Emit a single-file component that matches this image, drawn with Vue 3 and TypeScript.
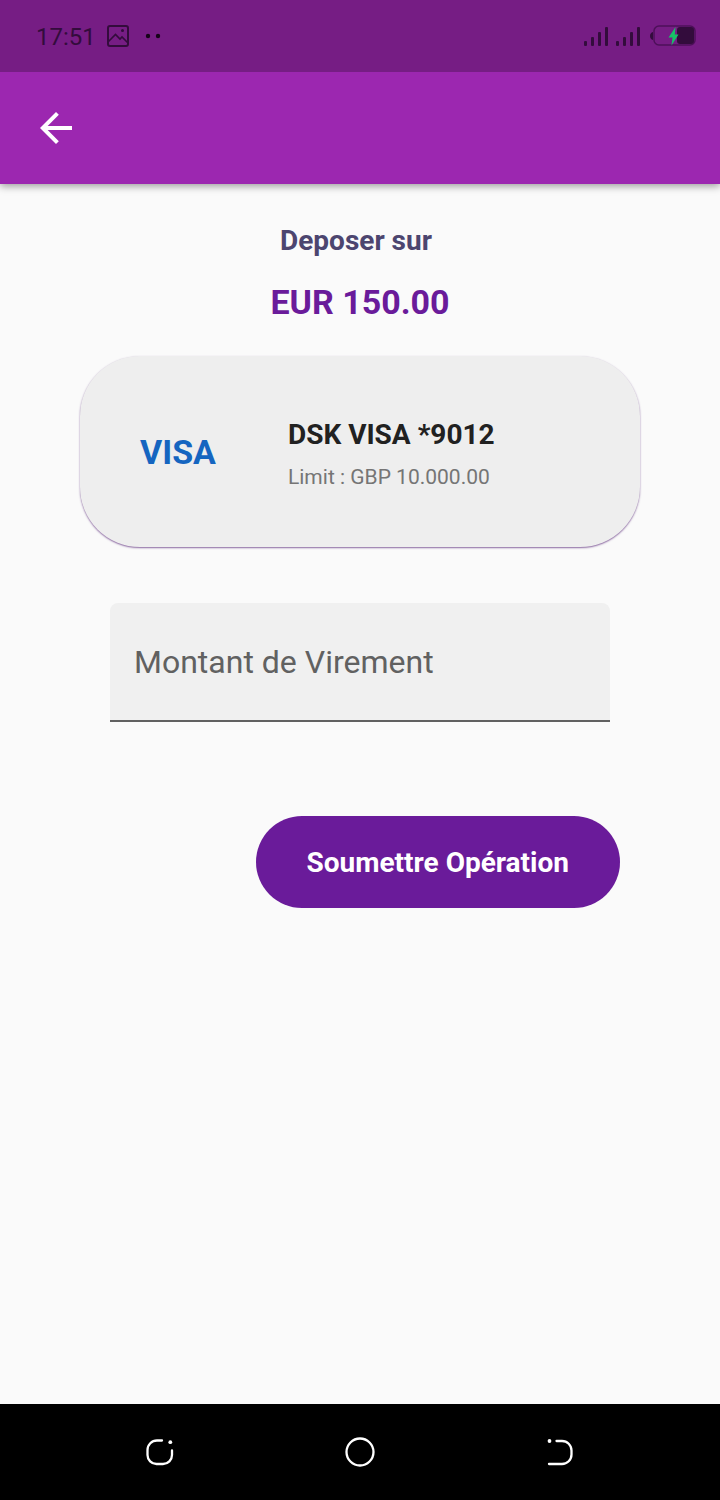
<script setup lang="ts">
import { ref } from 'vue'

interface Card {
  brand: string
  name: string
  limit: string
}

const card: Card = {
  brand: 'VISA',
  name: 'DSK VISA *9012',
  limit: 'Limit : GBP 10.000.00',
}

const amount = ref('')
const signals = [0, 32]
</script>

<template>
  <div class="screen">
    <div class="status-bar">
      <div class="status-group">
        <span class="clock">17:51</span>
        <svg class="picture" width="24" height="24" viewBox="0 0 24 24" fill="none" stroke="currentColor" stroke-width="2" aria-hidden="true">
          <rect x="2" y="2" width="20" height="20" rx="2" />
          <path d="M2.500 17.500L9.500 10.500L14 15L16 13L21.500 18.500" stroke-width="1.600" />
          <circle cx="16.500" cy="6.500" r="1.500" fill="currentColor" stroke="none" />
        </svg>
        <svg class="dots" width="16" height="24" viewBox="0 0 16 24" aria-hidden="true">
          <circle cx="3" cy="12" r="2.200" />
          <circle cx="13" cy="12" r="2.200" />
        </svg>
      </div>
      <div class="status-group">
        <svg width="58" height="24" viewBox="0 0 58 24" fill="currentColor" aria-hidden="true">
          <g v-for="x in signals" :key="x" :transform="`translate(${x} 0)`">
            <rect x="0" y="17" width="3" height="5" rx="1" />
            <rect x="7" y="13" width="3" height="9" rx="1" />
            <rect x="14" y="8" width="3" height="14" rx="1" />
            <rect x="21" y="3" width="3" height="19" rx="1" />
          </g>
        </svg>
        <svg class="battery" width="46" height="24" viewBox="0 0 46 24" aria-hidden="true">
          <path d="M3 8C-1 8.500 -1 15.500 3 16Z" fill="currentColor" />
          <rect x="4" y="2" width="41" height="19" rx="5" fill="none" stroke="#4d1059" stroke-width="1.500" />
          <rect x="27" y="3" width="17" height="17" rx="3" fill="currentColor" />
          <path d="M25.500 3L18.500 13.500H22.500L21.500 21.500L28.500 10.500H24.800Z" fill="#17c267" />
        </svg>
      </div>
    </div>

    <header class="app-bar">
      <button class="back" type="button" aria-label="Retour">
        <svg width="32" height="32" viewBox="4 4 16 16" fill="currentColor" aria-hidden="true">
          <path d="M20 11H7.830l5.590-5.590L12 4l-8 8 8 8 1.410-1.410L7.830 13H20v-2z" />
        </svg>
      </button>
    </header>

    <main class="content">
      <h1 class="title">Deposer sur</h1>
      <p class="balance">EUR 150.00</p>

      <section class="card">
        <span class="brand">{{ card.brand }}</span>
        <div class="card-info">
          <h2 class="card-name">{{ card.name }}</h2>
          <p class="card-limit">{{ card.limit }}</p>
        </div>
      </section>

      <form class="form" @submit.prevent>
        <div class="field">
          <label v-show="!amount" for="amount">Montant de Virement</label>
          <input id="amount" v-model="amount" type="text" inputmode="decimal" />
        </div>
        <button class="submit" type="submit">Soumettre Opération</button>
      </form>
    </main>

    <nav class="system-nav">
      <button type="button" aria-label="Applications">
        <svg width="32" height="32" viewBox="0 0 32 32" fill="none" stroke="currentColor" stroke-width="2.300" stroke-linecap="round" aria-hidden="true">
          <path d="M18 4.500H13A9.500 9.500 0 0 0 3.500 14V19A9 9 0 0 0 12.500 28H19A9 9 0 0 0 28 19V14.500" />
          <circle cx="26.300" cy="6.200" r="1.900" fill="currentColor" stroke="none" />
        </svg>
      </button>
      <button type="button" aria-label="Accueil">
        <svg width="32" height="32" viewBox="0 0 32 32" fill="none" stroke="currentColor" stroke-width="2.300" aria-hidden="true">
          <circle cx="16" cy="16" r="13.500" />
        </svg>
      </button>
      <button type="button" aria-label="Précédent">
        <svg width="32" height="32" viewBox="0 0 32 32" fill="none" stroke="currentColor" stroke-width="2.300" stroke-linecap="round" aria-hidden="true">
          <path d="M12.500 5H18A9.500 9.500 0 0 1 27.500 14.500V18.500A9.500 9.500 0 0 1 18 28H5" />
          <circle cx="5.500" cy="5" r="1.900" fill="currentColor" stroke="none" />
        </svg>
      </button>
    </nav>
  </div>
</template>

<style>
body {
  margin: 0;
}
</style>

<style scoped>
.screen {
  display: flex;
  flex-direction: column;
  min-height: 100vh;
  background: #fafafa;
  font-family: Roboto, 'Liberation Sans', sans-serif;
}

button {
  border: 0;
  padding: 0;
  background: none;
  color: inherit;
  font: inherit;
  cursor: pointer;
}

svg {
  display: block;
}

h1,
h2,
p {
  margin: 0;
}

.status-bar {
  position: relative;
  z-index: 1;
  display: flex;
  align-items: center;
  justify-content: space-between;
  height: 72px;
  padding: 0 24px 0 36px;
  box-sizing: border-box;
  background: #761d84;
  color: #330c3c;
}

.status-group {
  display: flex;
  align-items: center;
}

.clock {
  padding-top: 2px;
  font-size: 24px;
  line-height: 28px;
}

.picture {
  margin-left: 10px;
}

.dots {
  margin-left: 15px;
  fill: #160419;
}

.battery {
  margin-left: 8px;
}

.app-bar {
  display: flex;
  align-items: center;
  height: 112px;
  padding: 0 40px;
  background: #9c27b0;
  color: #fff;
  box-shadow: 0 2px 8px rgba(0, 0, 0, 0.4);
}

.content {
  display: flex;
  flex: 1;
  flex-direction: column;
  padding: 40px 80px;
}

.title {
  padding-right: 8px;
  color: #4c456f;
  font-size: 28px;
  line-height: 34px;
  text-align: center;
}

.balance {
  margin-top: 24px;
  color: #6a1b9a;
  font-size: 34px;
  font-weight: 700;
  line-height: 40px;
  text-align: center;
}

.card {
  display: flex;
  align-items: center;
  gap: 72px;
  min-height: 191px;
  margin-top: 34px;
  padding: 0 60px;
  box-sizing: border-box;
  border-radius: 60px;
  background: #eee;
  box-shadow: 0 1px 2px rgba(74, 20, 110, 0.5), 0 1px 1px rgba(74, 20, 110, 0.2);
}

.brand {
  color: #1565c0;
  font-size: 34px;
  font-weight: 700;
  line-height: 40px;
}

.card-info {
  padding-top: 4px;
}

.card-name {
  color: #212121;
  font-size: 28px;
  line-height: 32px;
}

.card-limit {
  margin-top: 14px;
  color: #757575;
  font-size: 21px;
  line-height: 24px;
}

.form {
  display: flex;
  flex-direction: column;
  margin-top: 56px;
}

.field {
  display: grid;
  margin: 0 30px;
}

.field label,
.field input {
  grid-area: 1 / 1;
  font-size: 32px;
}

.field label {
  z-index: 1;
  align-self: center;
  padding: 0 0 2px 24px;
  color: #616161;
  pointer-events: none;
}

.field input {
  width: 100%;
  height: 119px;
  box-sizing: border-box;
  padding: 0 24px;
  border: 0;
  border-bottom: 2px solid #616161;
  border-radius: 8px 8px 0 0;
  outline: 0;
  background: #f0f0f0;
  color: #212121;
  font-family: inherit;
}

.submit {
  align-self: flex-end;
  height: 92px;
  margin: 94px 20px 0 0;
  padding: 0 51px;
  border-radius: 46px;
  background: #6a1b9a;
  color: #fff;
  font-size: 28px;
  font-weight: 700;
}

.system-nav {
  display: flex;
  align-items: center;
  justify-content: center;
  gap: 168px;
  height: 96px;
  background: #000;
  color: #fff;
}
</style>
